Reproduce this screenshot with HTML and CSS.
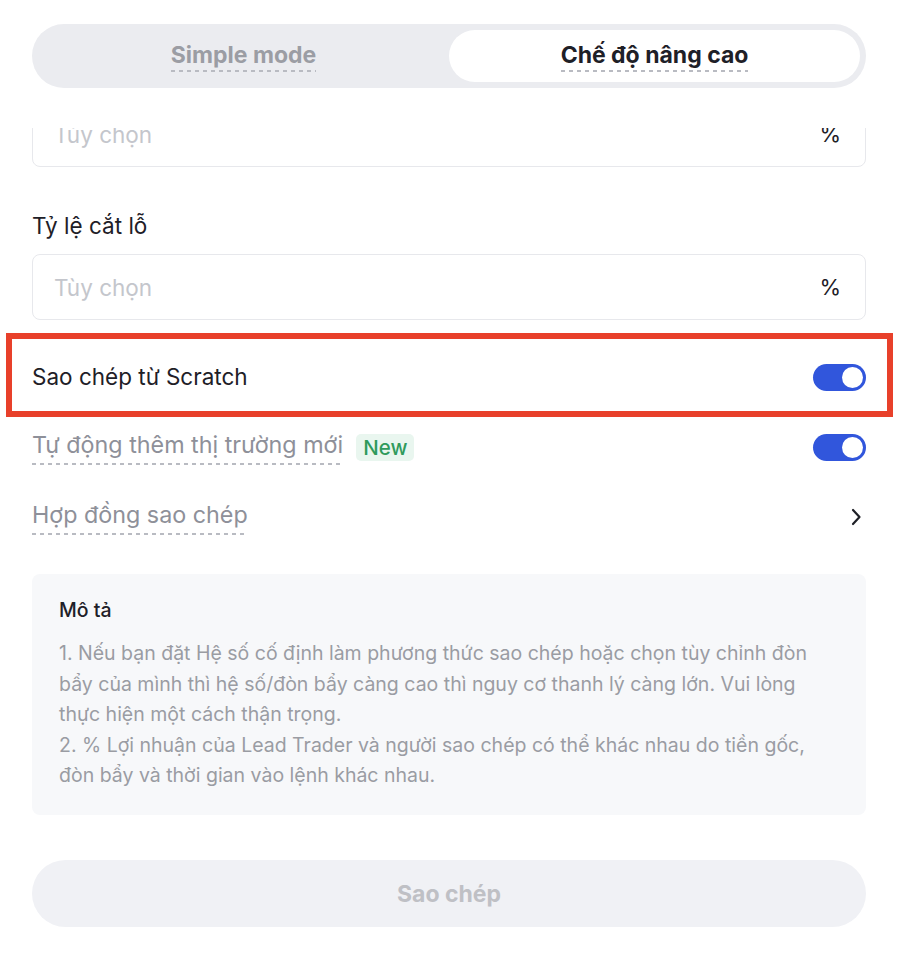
FILE: index.html
```html
<!DOCTYPE html>
<html lang="vi">
<head>
<meta charset="utf-8">
<link rel="stylesheet" href="styles.css">
</head>
<body>
<div class="tabs">
  <div class="tab"><span class="dash">Simple mode</span></div>
  <div class="tab active"><span class="dash">Chế độ nâng cao</span></div>
</div>
<div class="scroll">
  <div class="input first">
    <span class="ph">Tùy chọn</span><span class="unit">%</span>
  </div>
  <div class="label">Tỷ lệ cắt lỗ</div>
  <div class="input">
    <span class="ph">Tùy chọn</span><span class="unit">%</span>
  </div>
  <div class="row highlighted">
    <span class="row-title">Sao chép từ Scratch</span>
    <span class="toggle"><span class="knob"></span></span>
  </div>
  <div class="row">
    <span class="row-left"><span class="row-title gray dash">Tự động thêm thị trường mới</span><span class="badge">New</span></span>
    <span class="toggle"><span class="knob"></span></span>
  </div>
  <div class="row">
    <span class="row-title gray dash">Hợp đồng sao chép</span>
    <svg class="chev" width="14" height="20" viewBox="0 0 14 20"><polyline points="4,3 10.5,10 4,17" fill="none" stroke="#1e2027" stroke-width="2.2" stroke-linecap="round" stroke-linejoin="round"/></svg>
  </div>
  <div class="desc">
    <div class="desc-title">Mô tả</div>
    <div class="desc-body">1. Nếu bạn đặt Hệ số cố định làm phương thức sao chép hoặc chọn tùy chỉnh đòn bẩy của mình thì hệ số/đòn bẩy càng cao thì nguy cơ thanh lý càng lớn. Vui lòng thực hiện một cách thận trọng.<br>2. % Lợi nhuận của Lead Trader và người sao chép có thể khác nhau do tiền gốc, đòn bẩy và thời gian vào lệnh khác nhau.</div>
  </div>
  <div class="btn">Sao chép</div>
</div>
</body>
</html>
```
FILE: styles.css
```css
* { box-sizing: border-box; }
html, body { margin: 0; padding: 0; background: #fff; }
body {
  font-family: Inter, "Noto Sans", sans-serif;
  color: #1e2027;
  width: 900px;
  height: 966px;
  overflow: hidden;
}

.tabs {
  display: flex;
  height: 64px;
  margin: 24px 34px 0 32px;
  padding: 6px;
  background: #ebecf0;
  border-radius: 32px;
}
.tab {
  flex: 1;
  display: flex;
  align-items: center;
  justify-content: center;
  border-radius: 26px;
  font-size: 23px;
  font-weight: 700;
  color: #9b9da4;
}
.tab.active { background: #fff; color: #1e2027; }

.dash {
  padding-bottom: 5px;
  background-image: linear-gradient(to right, #b9bbc2 55%, transparent 0);
  background-size: 8px 1.5px;
  background-repeat: repeat-x;
  background-position: left bottom;
}
.tab .dash { padding-bottom: 3px; }

.scroll {
  margin-top: 40px;
  height: 838px;
  overflow: hidden;
  padding: 0 34px 0 32px;
}
.input {
  height: 66px;
  border: 1.5px solid #e7e8ec;
  border-radius: 8px;
  display: flex;
  align-items: center;
  justify-content: space-between;
  padding: 0 24px 0 21px;
  font-size: 22.5px;
}
.input.first { margin-top: -27px; }
.ph { color: #c4c6cc; }
.unit { color: #1e2027; font-size: 22px; }

.label {
  margin-top: 44px;
  margin-bottom: 13px;
  font-size: 22.5px;
  line-height: 30px;
}

.row {
  height: 70px;
  display: flex;
  align-items: center;
  justify-content: space-between;
  position: relative;
  font-size: 22.5px;
}
.highlighted { margin-top: 22px; }
.highlighted::after {
  content: "";
  position: absolute;
  left: -26px;
  right: -27px;
  top: -9px;
  bottom: -5px;
  border: 6px solid #e8402a;
}
.row-left { display: flex; align-items: center; }
.row-title { line-height: 30px; }
.row-title.gray { color: #8e9099; font-size: 23.3px; }
.badge {
  margin-left: 13px;
  height: 27px;
  padding: 0 7px;
  display: inline-flex;
  align-items: center;
  background: #e9f6ef;
  color: #2f9a5c;
  border-radius: 5px;
  font-size: 20.5px;
  font-weight: 500;
}
.toggle {
  width: 53px;
  height: 27px;
  border-radius: 14px;
  background: #3156dc;
  position: relative;
  display: inline-block;
}
.knob {
  position: absolute;
  right: 3px;
  top: 3px;
  width: 21px;
  height: 21px;
  border-radius: 50%;
  background: #fff;
}
.chev { margin-right: 3px; }

.desc {
  margin-top: 22px;
  background: #f7f8fa;
  border-radius: 8px;
  padding: 21px 27px 24px 27px;
  height: 241px;
}
.desc-title {
  font-size: 19.5px;
  font-weight: 500;
  line-height: 30px;
  color: #1e2027;
}
.desc-body {
  margin-top: 13px;
  font-size: 19.5px;
  line-height: 30.5px;
  color: #9a9ca3;
}

.btn {
  margin-top: 45px;
  height: 67px;
  border-radius: 34px;
  background: #f0f1f5;
  display: flex;
  align-items: center;
  justify-content: center;
  font-size: 23px;
  font-weight: 700;
  color: #bfc0c5;
}
```
